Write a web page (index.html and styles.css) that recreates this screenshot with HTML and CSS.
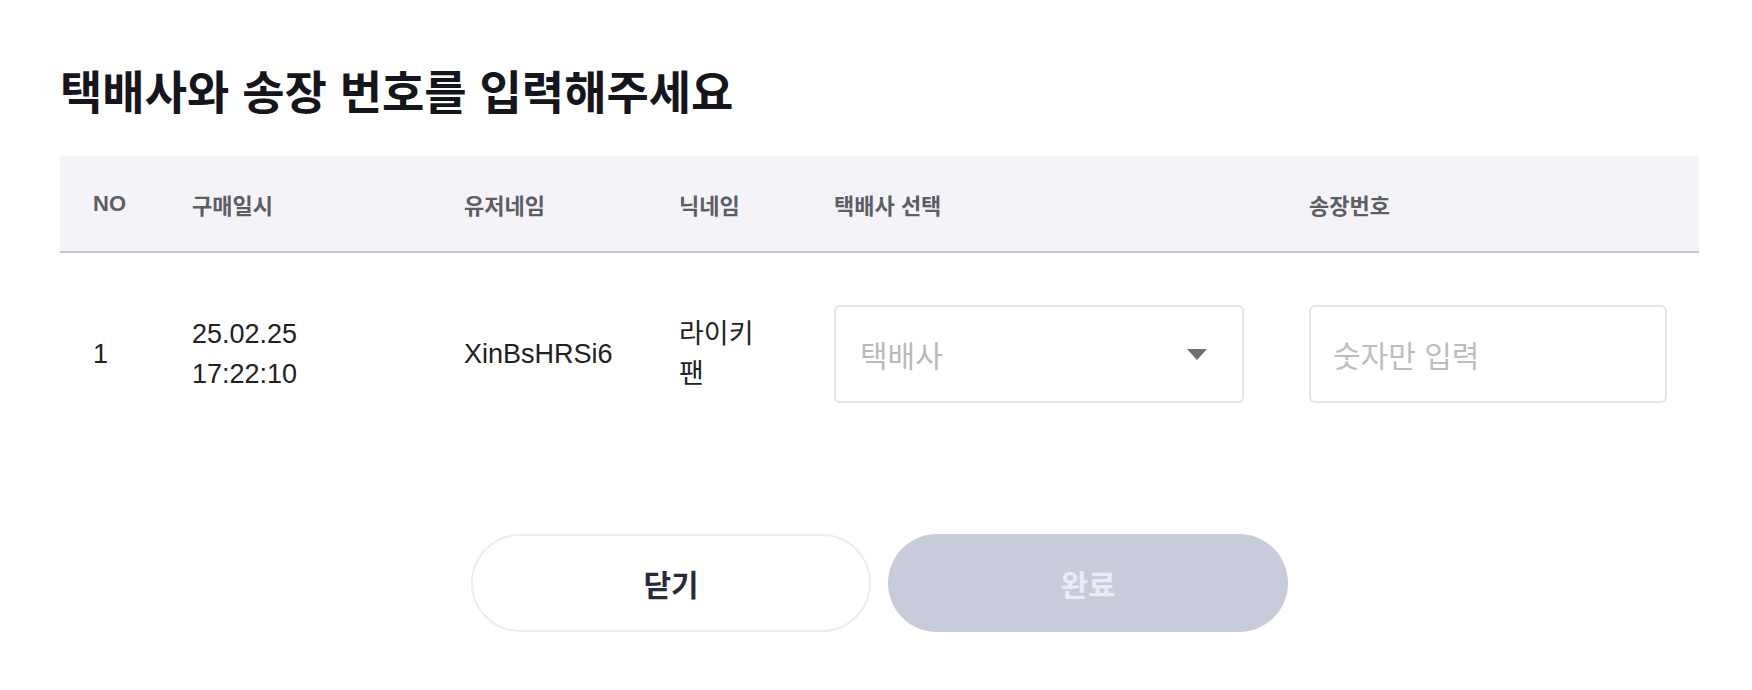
FILE: index.html
```html
<!DOCTYPE html>
<html lang="ko">
<head>
<meta charset="utf-8">
<title>택배사와 송장 번호를 입력해주세요</title>
<link rel="stylesheet" href="styles.css">
</head>
<body>
<div class="modal">
  <h1 class="title">택배사와 송장 번호를 입력해주세요</h1>
  <table class="ship-table">
    <colgroup>
      <col class="c-no">
      <col class="c-date">
      <col class="c-user">
      <col class="c-nick">
      <col class="c-courier">
      <col class="c-invoice">
    </colgroup>
    <thead>
      <tr>
        <th>NO</th>
        <th>구매일시</th>
        <th>유저네임</th>
        <th>닉네임</th>
        <th>택배사 선택</th>
        <th>송장번호</th>
      </tr>
    </thead>
    <tbody>
      <tr>
        <td>1</td>
        <td>25.02.25 17:22:10</td>
        <td>XinBsHRSi6</td>
        <td>라이키팬</td>
        <td>
          <div class="select">
            <span class="select-placeholder">택배사</span>
            <svg class="select-arrow" width="20" height="11" viewBox="0 0 20 11"><path d="M0 0H20L10 11Z" fill="#6f6f73"/></svg>
          </div>
        </td>
        <td><input class="text-input" type="text" placeholder="숫자만 입력"></td>
      </tr>
    </tbody>
  </table>
  <div class="actions">
    <button class="btn btn-close" type="button">닫기</button>
    <button class="btn btn-done" type="button" disabled>완료</button>
  </div>
</div>
</body>
</html>
```

FILE: styles.css
```css
* { box-sizing: border-box; }
html, body { margin: 0; padding: 0; background: #ffffff; }
body {
  width: 1752px;
  height: 690px;
  overflow: hidden;
  font-family: "Liberation Sans", "Noto Sans CJK KR", sans-serif;
  color: #222222;
}
.modal {
  width: 1752px;
  padding: 64px 53px 0 60px;
}
.title {
  margin: 0;
  font-family: "Noto Sans CJK KR", sans-serif;
  font-size: 46px;
  line-height: 50px;
  font-weight: 700;
  color: #15151c;
  letter-spacing: 0;
}
.ship-table {
  margin-top: 42px;
  width: 1639px;
  border-collapse: collapse;
  table-layout: fixed;
}
.c-no { width: 99px; }
.c-date { width: 272px; }
.c-user { width: 215px; }
.c-nick { width: 155px; }
.c-courier { width: 475px; }
.c-invoice { width: 423px; }
.ship-table th {
  height: 96px;
  background: #f3f3f8;
  border-bottom: 2px solid #c6c6ca;
  text-align: left;
  padding: 0 32px 0 33px;
  font-family: "Noto Sans CJK KR", sans-serif;
  font-size: 22px;
  font-weight: 700;
  color: #5d5d66;
}
.ship-table th:first-child {
  font-family: "Liberation Sans", sans-serif;
}
.ship-table td {
  padding: 52px 32px 52px 33px;
  font-size: 27px;
  line-height: 40px;
  color: #222222;
  vertical-align: middle;
}
.select {
  display: flex;
  align-items: center;
  justify-content: space-between;
  height: 98px;
  padding: 0 35px 0 24px;
  border: 2px solid #e4e4e8;
  border-radius: 6px;
  background: #ffffff;
}
.select-placeholder {
  font-family: "Noto Sans CJK KR", sans-serif;
  font-size: 30px;
  color: #b9b9bd;
}
.select-arrow { display: block; }
.text-input {
  display: block;
  width: 100%;
  height: 98px;
  padding: 0 22px;
  border: 2px solid #e4e4e8;
  border-radius: 6px;
  outline: none;
  font-family: "Noto Sans CJK KR", sans-serif;
  font-size: 30px;
  color: #222222;
  background: #ffffff;
}
.text-input::placeholder { color: #bdbdc1; }
.actions {
  display: flex;
  justify-content: center;
  gap: 17px;
  width: 1639px;
  margin-top: 79px;
}
.btn {
  width: 400px;
  height: 98px;
  border-radius: 49px;
  font-family: "Noto Sans CJK KR", sans-serif;
  font-size: 30px;
  font-weight: 700;
  cursor: pointer;
}
.btn-close {
  background: #ffffff;
  border: 2px solid #ececf3;
  color: #2a2a3a;
}
.btn-done {
  background: #c8cbda;
  border: none;
  color: #ebebf3;
}
```
